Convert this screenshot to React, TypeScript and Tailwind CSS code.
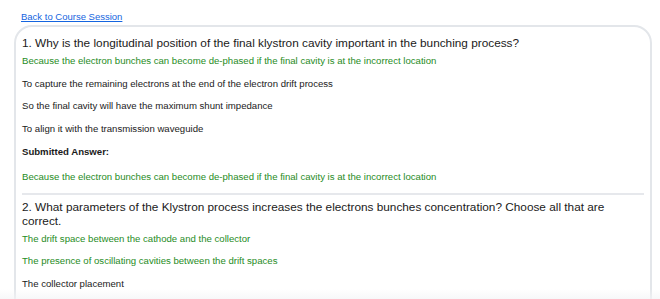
import React from 'react';

interface Question {
  title: string;
  options: { text: string; correct: boolean }[];
  submitted?: string;
}

const questions: Question[] = [
  {
    title: '1. Why is the longitudinal position of the final klystron cavity important in the bunching process?',
    options: [
      { text: 'Because the electron bunches can become de-phased if the final cavity is at the incorrect location', correct: true },
      { text: 'To capture the remaining electrons at the end of the electron drift process', correct: false },
      { text: 'So the final cavity will have the maximum shunt impedance', correct: false },
      { text: 'To align it with the transmission waveguide', correct: false },
    ],
    submitted: 'Because the electron bunches can become de-phased if the final cavity is at the incorrect location',
  },
  {
    title: '2. What parameters of the Klystron process increases the electrons bunches concentration? Choose all that are correct.',
    options: [
      { text: 'The drift space between the cathode and the collector', correct: true },
      { text: 'The presence of oscillating cavities between the drift spaces', correct: true },
      { text: 'The collector placement', correct: false },
    ],
  },
];

const QuestionBlock: React.FC<{ q: Question; last: boolean }> = ({ q, last }) => (
  <div className={last ? 'pt-[5px]' : 'pb-[10px] border-b-2 border-[#e6e8ec]'}>
    <h2 className="text-[11.8px] leading-[14px] text-[#1a1a1a] pr-[24px]">{q.title}</h2>
    {q.options.map((o, i) => (
      <p
        key={i}
        className={`text-[9.6px] leading-[12px] ${i === 0 ? 'mt-[5px]' : 'mt-[10.5px]'} ${
          o.correct ? 'text-[#1f8c25]' : 'text-[#1a1a1a]'
        }`}
      >
        {o.text}
      </p>
    ))}
    {q.submitted && (
      <>
        <p className="mt-[11px] text-[9.6px] leading-[12px] font-bold text-[#1a1a1a]">Submitted Answer:</p>
        <p className="mt-[13px] text-[9.6px] leading-[12px] text-[#1f8c25]">{q.submitted}</p>
      </>
    )}
  </div>
);

export default function App() {
  return (
    <div
      className="relative h-[299px] overflow-hidden bg-white"
      style={{ fontFamily: '"Liberation Sans", Arial, sans-serif' }}
    >
      <div className="pl-[21px] pt-[11px] h-[25px] leading-[12px]">
        <a href="#" className="block w-fit text-[9.5px] leading-[12px] text-[#1565e0] underline">
          Back to Course Session
        </a>
      </div>
      <div className="ml-[14px] mr-[8px] border-2 border-[#e3e6ea] rounded-[18px] px-[6px] pt-[9px] h-[400px]">
        {questions.map((q, i) => (
          <QuestionBlock key={i} q={q} last={i === questions.length - 1} />
        ))}
      </div>
      <div className="absolute left-0 right-0 bottom-0 h-[10px] bg-gradient-to-b from-transparent to-[#f3f4f6]/70 pointer-events-none" />
    </div>
  );
}
